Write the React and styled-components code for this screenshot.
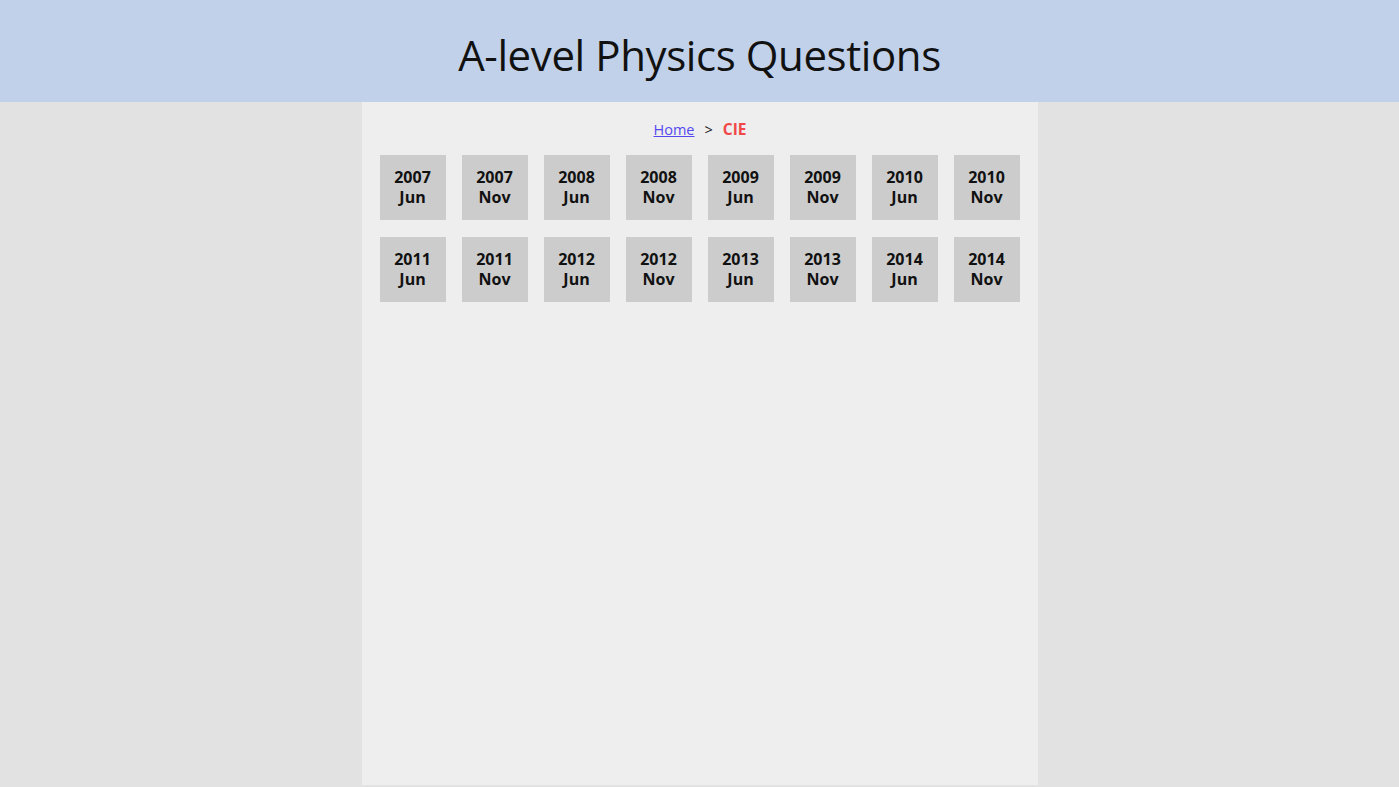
import React from "react";
import styled, { createGlobalStyle } from "styled-components";

const GlobalStyle = createGlobalStyle`
  html, body {
    margin: 0;
    padding: 0;
    background: #e2e2e2;
    font-family: "Open Sans", "Noto Sans", sans-serif;
  }
`;

const Page = styled.div`
  display: flex;
  flex-direction: column;
  min-height: 785px;
`;

const Header = styled.header`
  height: 102px;
  background: #c1d1ea;
  display: flex;
  align-items: center;
  justify-content: center;
`;

const Title = styled.h1`
  margin: 6px 0 0;
  font-size: 42px;
  font-weight: 400;
  color: #111;
  letter-spacing: -0.4px;
`;

const Main = styled.main`
  flex: 1;
  width: 676px;
  margin: 0 auto;
  background: #eeeeee;
  padding: 16px 18px 0 18px;
  box-sizing: border-box;
`;

const Breadcrumb = styled.nav`
  display: flex;
  justify-content: center;
  align-items: baseline;
  gap: 10px;
  font-size: 14.5px;
  margin-bottom: 15px;
  padding-left: 1px;
`;

const HomeLink = styled.a`
  color: #5548ee;
  text-decoration: underline;
`;

const Separator = styled.span`
  color: #222;
`;

const Current = styled.span`
  color: #f04848;
  font-weight: 700;
  font-size: 15.5px;
`;

const Grid = styled.div`
  display: grid;
  grid-template-columns: repeat(8, 66px);
  column-gap: 16px;
  row-gap: 17px;
`;

const Tile = styled.a`
  height: 65px;
  background: #cccccc;
  display: flex;
  flex-direction: column;
  align-items: center;
  justify-content: center;
  color: #111;
  font-weight: 700;
  font-size: 16px;
  line-height: 20px;
  text-decoration: none;
  padding-bottom: 1px;
  box-sizing: border-box;
`;

const sessions = [];
for (let year = 2007; year <= 2014; year++) {
  sessions.push({ year, month: "Jun" });
  sessions.push({ year, month: "Nov" });
}

const App = () => (
  <>
    <GlobalStyle />
    <Page>
      <Header>
        <Title>A-level Physics Questions</Title>
      </Header>
      <Main>
        <Breadcrumb>
          <HomeLink href="#">Home</HomeLink>
          <Separator>&gt;</Separator>
          <Current>CIE</Current>
        </Breadcrumb>
        <Grid>
          {sessions.map((s) => (
            <Tile key={`${s.year}-${s.month}`} href="#">
              <span>{s.year}</span>
              <span>{s.month}</span>
            </Tile>
          ))}
        </Grid>
      </Main>
    </Page>
  </>
);

export default App;
